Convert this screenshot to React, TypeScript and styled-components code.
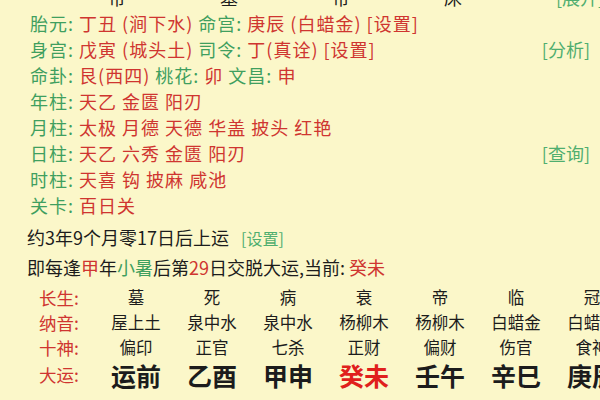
import React from 'react';
import styled, { createGlobalStyle } from 'styled-components';

const GREEN = '#3f9f5f';
const RED = '#cf3530';
const INK = '#1c1c1c';

interface Part {
  t: string;
  c?: 'g' | 'r' | 'k';
}

interface InfoRow {
  parts: Part[];
  link?: string;
}

const infoRows: InfoRow[] = [
  {
    parts: [
      { t: '胎元: ', c: 'g' },
      { t: '丁丑 (涧下水) ', c: 'r' },
      { t: '命宫: ', c: 'g' },
      { t: '庚辰 (白蜡金) [设置]', c: 'r' },
    ],
  },
  {
    parts: [
      { t: '身宫: ', c: 'g' },
      { t: '戊寅 (城头土) ', c: 'r' },
      { t: '司令: ', c: 'g' },
      { t: '丁(真诠) [设置]', c: 'r' },
    ],
    link: '[分析]',
  },
  {
    parts: [
      { t: '命卦: ', c: 'g' },
      { t: '艮(西四) ', c: 'r' },
      { t: '桃花: ', c: 'g' },
      { t: '卯 ', c: 'r' },
      { t: '文昌: ', c: 'g' },
      { t: '申', c: 'r' },
    ],
  },
  { parts: [{ t: '年柱: ', c: 'g' }, { t: '天乙 金匮 阳刃', c: 'r' }] },
  { parts: [{ t: '月柱: ', c: 'g' }, { t: '太极 月德 天德 华盖 披头 红艳', c: 'r' }] },
  { parts: [{ t: '日柱: ', c: 'g' }, { t: '天乙 六秀 金匮 阳刃', c: 'r' }], link: '[查询]' },
  { parts: [{ t: '时柱: ', c: 'g' }, { t: '天喜 钩 披麻 咸池', c: 'r' }] },
  { parts: [{ t: '关卡: ', c: 'g' }, { t: '百日关', c: 'r' }] },
];

const table = [
  { label: '长生:', cells: ['墓', '死', '病', '衰', '帝', '临', '冠'] },
  { label: '纳音:', cells: ['屋上土', '泉中水', '泉中水', '杨柳木', '杨柳木', '白蜡金', '白蜡金'] },
  { label: '十神:', cells: ['偏印', '正官', '七杀', '正财', '偏财', '伤官', '食神'] },
];

const dayun = ['运前', '乙酉', '甲申', '癸未', '壬午', '辛巳', '庚辰'];

const GlobalStyle = createGlobalStyle`
  html, body {
    margin: 0;
    padding: 0;
    background: #fbf7c9;
  }
  body {
    font-family: "Noto Sans CJK SC", "Noto Sans", sans-serif;
  }
`;

const Page = styled.div`
  width: 600px;
  height: 400px;
  overflow: hidden;
  background: #fbf7c9;
  padding: 0 10px 0 30px;
  box-sizing: border-box;
  color: ${INK};
`;

const CutRow = styled.div`
  display: flex;
  align-items: center;
  height: 26px;
  margin-top: -16px;
  padding-left: 78px;
  gap: 94px;
  font-size: 18px;
  line-height: 26px;
  white-space: nowrap;
`;

const Line = styled.div`
  display: flex;
  align-items: center;
  justify-content: space-between;
  height: 26px;
  font-size: 18px;
  letter-spacing: 1px;
  line-height: 26px;
  white-space: pre;
`;

const Span = styled.span<{ $c?: 'g' | 'r' | 'k' }>`
  color: ${(p) => (p.$c === 'g' ? GREEN : p.$c === 'r' ? RED : INK)};
`;

const Link = styled.span`
  color: #4fae6f;
  margin-left: auto;
  flex-shrink: 0;
  letter-spacing: 0;
`;

const Summary = styled.div`
  margin-top: 4px;
  margin-left: -3px;
  display: flex;
  flex-direction: column;
`;

const SummaryLine = styled.div`
  height: 30px;
  font-size: 18px;
  line-height: 30px;
  white-space: pre;
  color: ${INK};
`;

const SetLink = styled.span`
  color: #4fae6f;
  font-size: 16px;
  margin-left: 12px;
`;

const Grid = styled.div`
  margin-top: 3px;
  margin-left: 9px;
  display: grid;
  grid-template-columns: 59px repeat(7, 76px);
  grid-auto-rows: 25px;
  align-items: center;
`;

const Label = styled.div`
  color: ${RED};
  font-size: 17.5px;
  line-height: 25px;
`;

const Cell = styled.div<{ $big?: boolean; $hot?: boolean }>`
  text-align: center;
  white-space: nowrap;
  font-size: ${(p) => (p.$big ? '25px' : '16.5px')};
  font-weight: ${(p) => (p.$big ? 700 : 400)};
  color: ${(p) => (p.$hot ? '#e0201c' : INK)};
  line-height: 25px;
  padding-top: ${(p) => (p.$big ? '6px' : '0')};
`;

const BigLabel = styled(Label)`
  padding-top: 4px;
`;

const App: React.FC = () => (
  <>
    <GlobalStyle />
    <Page>
      <CutRow>
        <span>帝</span>
        <span>墓</span>
        <span>帝</span>
        <span>床</span>
        <Link>[展开]</Link>
      </CutRow>
      {infoRows.map((row, i) => (
        <Line key={i}>
          <span>
            {row.parts.map((p, j) => (
              <Span key={j} $c={p.c}>
                {p.t}
              </Span>
            ))}
          </span>
          {row.link && <Link>{row.link}</Link>}
        </Line>
      ))}
      <Summary>
        <SummaryLine>
          约3年9个月零17日后上运<SetLink>[设置]</SetLink>
        </SummaryLine>
        <SummaryLine>
          即每逢<Span $c="r">甲</Span>年<Span $c="g">小暑</Span>后第<Span $c="r">29</Span>日交脱大运,当前:{' '}
          <Span $c="r">癸未</Span>
        </SummaryLine>
      </Summary>
      <Grid>
        {table.map((row) => (
          <React.Fragment key={row.label}>
            <Label>{row.label}</Label>
            {row.cells.map((c, i) => (
              <Cell key={i}>{c}</Cell>
            ))}
          </React.Fragment>
        ))}
        <BigLabel>大运:</BigLabel>
        {dayun.map((c, i) => (
          <Cell key={i} $big $hot={c === '癸未'}>
            {c}
          </Cell>
        ))}
      </Grid>
    </Page>
  </>
);

export default App;
